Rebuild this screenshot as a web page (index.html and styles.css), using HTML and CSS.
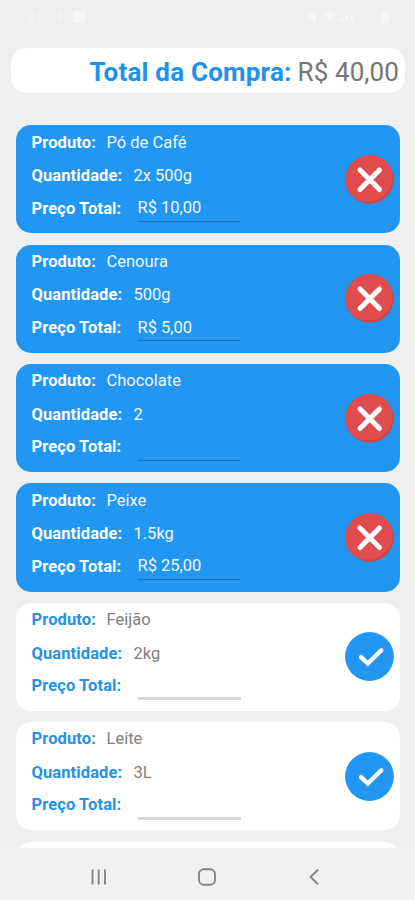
FILE: index.html
```html
<!DOCTYPE html>
<html lang="pt-BR">
<head>
<meta charset="utf-8">
<meta name="viewport" content="width=device-width">
<title>Lista de Compras</title>
<link rel="stylesheet" href="styles.css">
</head>
<body>
<svg class="defs" aria-hidden="true">
  <symbol id="remove" viewBox="0 0 49 49">
    <circle cx="24.5" cy="24.5" r="24.2" fill="#d54245"/>
    <path d="M24.5.3C38 .3 47.500 9 47.500 21.500c0 14-10 25-25 25C9 46.500.3 37 .3 24.500A24.200 24.200 0 0 1 24.500.3z" fill="#e14c4c"/>
    <path d="M15 15l19.500 19.500M34.500 15L15 34.500" stroke="#fff" stroke-width="5" stroke-linecap="round"/>
  </symbol>
  <symbol id="check" viewBox="0 0 49 49">
    <circle cx="24.500" cy="24.500" r="24.400" fill="#2196f3"/>
    <path d="M16 25.200l6.800 6.300L36.300 18.300" fill="none" stroke="#fff" stroke-width="4.400" stroke-linecap="round"/>
  </symbol>
</svg>
<div class="screen">
  <header class="status">
    <span class="time">21:24</span>
    <svg class="picture" width="14" height="14" viewBox="0 0 14 14"><path d="M1 1h12v12H1z"/></svg>
    <svg class="mute" width="12" height="12" viewBox="0 0 12 12"><path d="M0 3h3l5-3v12L3 9H0z"/></svg>
    <svg class="signal" width="42" height="12" viewBox="0 0 42 12"><path d="M0 3q6-5 12 0L6 10zM16 10h3V7h-3zM21 10h3V5h-3zM26 10h3V3h-3z"/></svg>
    <svg class="battery" width="8" height="12" viewBox="0 0 8 12"><path d="M0 2h2V0h4v2h2v10H0z"/></svg>
  </header>
  <div class="total"><b>Total da Compra:</b><span>R$ 40,00</span></div>
  <main class="list">
    <article class="card bought">
      <div class="fields">
        <div class="row"><b class="product">Produto:</b><span>Pó de Café</span></div>
        <div class="row"><b class="quantity">Quantidade:</b><span>2x 500g</span></div>
        <div class="row"><b class="price">Preço Total:</b><span class="input">R$ 10,00</span></div>
      </div>
      <svg class="action"><use href="#remove"/></svg>
    </article>
    <article class="card bought">
      <div class="fields">
        <div class="row"><b class="product">Produto:</b><span>Cenoura</span></div>
        <div class="row"><b class="quantity">Quantidade:</b><span>500g</span></div>
        <div class="row"><b class="price">Preço Total:</b><span class="input">R$ 5,00</span></div>
      </div>
      <svg class="action"><use href="#remove"/></svg>
    </article>
    <article class="card bought">
      <div class="fields">
        <div class="row"><b class="product">Produto:</b><span>Chocolate</span></div>
        <div class="row"><b class="quantity">Quantidade:</b><span>2</span></div>
        <div class="row"><b class="price">Preço Total:</b><span class="input"></span></div>
      </div>
      <svg class="action"><use href="#remove"/></svg>
    </article>
    <article class="card bought">
      <div class="fields">
        <div class="row"><b class="product">Produto:</b><span>Peixe</span></div>
        <div class="row"><b class="quantity">Quantidade:</b><span>1.5kg</span></div>
        <div class="row"><b class="price">Preço Total:</b><span class="input">R$ 25,00</span></div>
      </div>
      <svg class="action"><use href="#remove"/></svg>
    </article>
    <article class="card">
      <div class="fields">
        <div class="row"><b class="product">Produto:</b><span>Feijão</span></div>
        <div class="row"><b class="quantity">Quantidade:</b><span>2kg</span></div>
        <div class="row"><b class="price">Preço Total:</b><span class="input"></span></div>
      </div>
      <svg class="action"><use href="#check"/></svg>
    </article>
    <article class="card">
      <div class="fields">
        <div class="row"><b class="product">Produto:</b><span>Leite</span></div>
        <div class="row"><b class="quantity">Quantidade:</b><span>3L</span></div>
        <div class="row"><b class="price">Preço Total:</b><span class="input"></span></div>
      </div>
      <svg class="action"><use href="#check"/></svg>
    </article>
    <article class="card"></article>
  </main>
  <nav class="nav">
    <svg width="16" height="16" viewBox="0 0 16 16"><path d="M1.500 .5v15M7.700 .5v15M14 .5v15"/></svg>
    <svg class="home" width="18" height="18" viewBox="0 0 18 18"><rect x="1" y="1.200" width="16" height="15.600" rx="4.800"/></svg>
    <svg width="10" height="16" viewBox="0 0 10 16"><path d="M9 .8L1.500 8 9 15.200"/></svg>
  </nav>
</div>
</body>
</html>
```
FILE: styles.css
```css
* { box-sizing: border-box; }
body {
  margin: 0;
  background: #efefef;
  font-family: Roboto, sans-serif;
}
.defs { display: none; }
.screen {
  display: flex;
  flex-direction: column;
  width: 415px;
  height: 900px;
  overflow: hidden;
}
.status {
  display: flex;
  align-items: center;
  height: 48px;
  padding: 0 26px 15px 28px;
  color: #f6f6f6;
  font-size: 14px;
}
.status svg { fill: #f6f6f6; }
.time { width: 44px; }
.mute { margin-left: auto; }
.signal { margin: 0 15px 0 4px; }
.total {
  display: flex;
  justify-content: flex-end;
  align-items: center;
  height: 45px;
  margin: 0 10px 0 11px;
  padding: 2px 6px 0 0;
  gap: 6px;
  border-radius: 15px;
  background: #fff;
  color: #757575;
  font-size: 26px;
  white-space: nowrap;
}
.total b { color: #1e90ee; letter-spacing: .2px; }
.total span { letter-spacing: .1px; }
.list {
  display: flex;
  flex-direction: column;
  gap: 11.200px;
  height: 755px;
  padding: 32.300px 15.500px 0 16px;
  overflow: hidden;
}
.card {
  display: flex;
  flex: none;
  justify-content: space-between;
  align-items: center;
  height: 108.200px;
  padding: 0 5.500px 0 15.500px;
  border-radius: 15px;
  background: #fff;
  color: #808080;
  font-size: 16.500px;
}
.card b { color: #2592e6; letter-spacing: .1px; }
.bought { background: #2196f3; color: #f1f8fe; }
.bought b { color: #fff; }
.fields { align-self: flex-start; }
.row {
  display: flex;
  align-items: center;
  height: 33.500px;
  white-space: nowrap;
}
.row:last-child { height: 31.500px; }
.product { width: 75px; }
.quantity { width: 102px; }
.price { width: 106px; }
.input {
  align-self: flex-start;
  width: 103.500px;
  height: 30.500px;
  line-height: 31.500px;
  border-bottom: 3px solid #d6d6d6;
}
.bought .input { height: 29.700px; border-bottom: 1px solid #1976bd; }
.action { width: 49px; height: 49px; }
.nav {
  display: flex;
  align-items: center;
  height: 52px;
  padding: 5px 96px 0 90.500px;
  justify-content: space-between;
  background: #f1f1f1;
}
.nav svg { fill: none; stroke: #858585; stroke-width: 1.900; }
.nav .home { margin-right: 2px; }
```
